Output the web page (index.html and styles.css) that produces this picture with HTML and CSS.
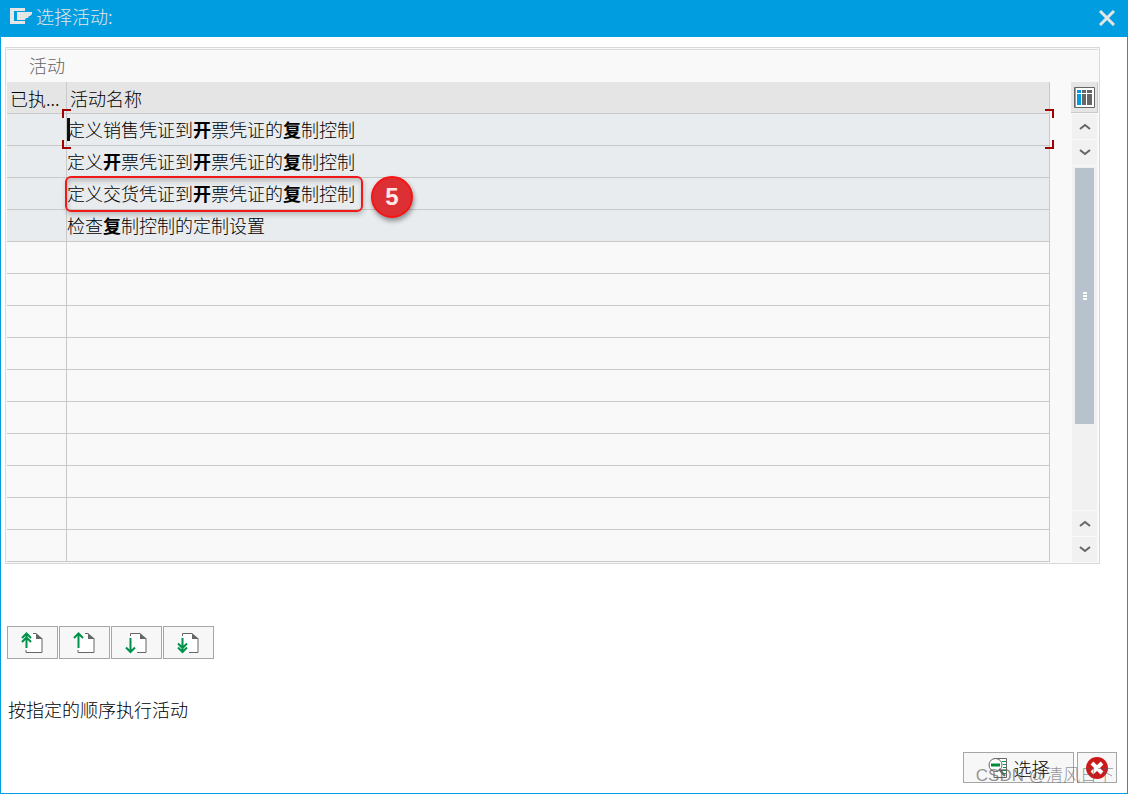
FILE: index.html
```
<!DOCTYPE html>
<html lang="zh-CN">
<head>
    <meta charset="UTF-8">
    <title>选择活动</title>
    <link rel="stylesheet" href="styles.css">
</head>
<body>
<div class="window">
    <header class="titlebar">
        <svg class="logo" width="22" height="16" viewBox="0 0 22 16">
            <path d="M0 0h15v3H4v10h11v3H0z"/>
            <path d="M7 4h15v2l-2 2h-1l-1 2h-2l-1 2H7z"/>
        </svg>
        <h1>选择活动:</h1>
        <button class="close" type="button" aria-label="关闭">
            <svg width="16" height="16" viewBox="0 0 16 16"><path d="M1 1l14 14M15 1L1 15"/></svg>
        </button>
    </header>
    <main>
        <section class="panel">
            <h2>活动</h2>
            <div class="grid">
                <table>
                    <thead>
                    <tr><th class="done">已执...</th><th>活动名称</th></tr>
                    </thead>
                    <tbody>
                    <tr class="filled"><td></td><td class="focus"><i class="caret"></i><i class="corner tl"></i><i class="corner tr"></i><i class="corner bl"></i><i class="corner br"></i><span>定义销售凭证到<b>开</b>票凭证的<b>复</b>制控制</span></td></tr>
                    <tr class="filled"><td></td><td>定义<b>开</b>票凭证到<b>开</b>票凭证的<b>复</b>制控制</td></tr>
                    <tr class="filled"><td></td><td class="marked"><i class="frame"></i><i class="step">5</i>定义交货凭证到<b>开</b>票凭证的<b>复</b>制控制</td></tr>
                    <tr class="filled"><td></td><td>检查<b>复</b>制控制的定制设置</td></tr>
                    <tr><td></td><td></td></tr>
                    <tr><td></td><td></td></tr>
                    <tr><td></td><td></td></tr>
                    <tr><td></td><td></td></tr>
                    <tr><td></td><td></td></tr>
                    <tr><td></td><td></td></tr>
                    <tr><td></td><td></td></tr>
                    <tr><td></td><td></td></tr>
                    <tr><td></td><td></td></tr>
                    <tr><td></td><td></td></tr>
                    </tbody>
                </table>
                <div class="side">
                    <button class="config" type="button" aria-label="表格设置">
                        <svg width="21" height="21" viewBox="0 0 21 21">
                            <path fill="#fff" stroke="#666" d="M.5.5h20v20H.5z"/>
                            <path fill="none" stroke="#6fa8dc" d="M1.5 1v19"/>
                            <path fill="#009de0" d="M3 3h4v3H3zM3 7h4v11H3z"/>
                            <path fill="#666" d="M8 3h4v3H8zM8 7h4v11H8zM13 3h5v3h-5zM13 7h5v11h-5z"/>
                        </svg>
                    </button>
                    <button class="arrow" type="button" aria-label="向上"><svg width="12" height="8" viewBox="0 0 12 8"><path d="M1 6l5-4 5 4"/></svg></button>
                    <button class="arrow" type="button" aria-label="向下"><svg width="12" height="8" viewBox="0 0 12 8"><path d="M1 1l5 4 5-4"/></svg></button>
                    <div class="track"><div class="thumb"><i></i><i></i><i></i></div></div>
                    <button class="arrow" type="button" aria-label="上一页"><svg width="12" height="8" viewBox="0 0 12 8"><path d="M1 6l5-4 5 4"/></svg></button>
                    <button class="arrow" type="button" aria-label="下一页"><svg width="12" height="8" viewBox="0 0 12 8"><path d="M1 1l5 4 5-4"/></svg></button>
                </div>
            </div>
        </section>

        <div class="toolbar">
            <button type="button" aria-label="第一页">
                <svg width="24" height="22" viewBox="0 0 24 22">
                    <path class="sheet" d="M6 2h10v5h5v14H6z"/>
                    <path class="line" d="M12 1.500h3M21 7v13.500H5V18"/>
                    <path class="fold" d="M15 1l7 6h-7z"/>
                    <path class="green" d="M5.500 16V2M1 6l4.500-4.500L10 6M1 10l4.500-4.500L10 10"/>
                </svg>
            </button>
            <button type="button" aria-label="上一页">
                <svg width="24" height="22" viewBox="0 0 24 22">
                    <path class="sheet" d="M6 2h10v5h5v14H6z"/>
                    <path class="line" d="M12 1.500h3M21 7v13.500H5V18"/>
                    <path class="fold" d="M15 1l7 6h-7z"/>
                    <path class="green" d="M5.500 16V2M1 6l4.500-4.500L10 6"/>
                </svg>
            </button>
            <button type="button" aria-label="下一页">
                <svg width="24" height="22" viewBox="0 0 24 22">
                    <path class="sheet" d="M6 2h10v5h5v14H6z"/>
                    <path class="line" d="M5.500 4V1.500H15M21 7v13.500H12"/>
                    <path class="fold" d="M15 1l7 6h-7z"/>
                    <path class="green" d="M5.500 6v14M1 15.500L5.500 20l4.500-4.500"/>
                </svg>
            </button>
            <button type="button" aria-label="最后一页">
                <svg width="24" height="22" viewBox="0 0 24 22">
                    <path class="sheet" d="M6 2h10v5h5v14H6z"/>
                    <path class="line" d="M5.500 4V1.500H15M21 7v13.500H12"/>
                    <path class="fold" d="M15 1l7 6h-7z"/>
                    <path class="green" d="M5.500 6v14M1 15.500L5.500 20l4.500-4.500M1 11.500L5.500 16l4.500-4.500"/>
                </svg>
            </button>
        </div>

        <p class="hint">按指定的顺序执行活动</p>
    </main>
    <footer>
        <button class="choose" type="button">
            <svg width="20" height="20" viewBox="0 0 20 20">
                <path fill="#fff" stroke="#666" d="M6 .5h12.500v19H6z"/>
                <path fill="none" stroke="#009a44" d="M14 3.500h4M15 6.500h3M15 9.500h3M13 12.500h5M14 15.500h4"/>
                <circle cx="7.500" cy="7" r="6.500" fill="#fff" stroke="#666"/>
                <path stroke="#008a3b" stroke-width="3" d="M3 7h9"/>
                <path stroke="#666" stroke-width="2" d="M11 11l6 7"/>
            </svg>
            <span>选择</span>
        </button>
        <button class="cancel" type="button" aria-label="取消">
            <svg width="22" height="22" viewBox="0 0 22 22">
                <circle cx="11" cy="11" r="11" fill="#cc1919"/>
                <path stroke="#fff" stroke-width="4" d="M6 6l10 10M16 6L6 16"/>
            </svg>
        </button>
        <span class="watermark">CSDN @清风日下</span>
    </footer>
</div>
</body>
</html>
```
FILE: styles.css
```
* {
    box-sizing: border-box;
}

body, h1, h2, p {
    margin: 0;
}

body {
    font: 300 18px/24px "Noto Sans CJK SC", sans-serif;
    color: #000;
    background: #fff;
}

button {
    display: flex;
    align-items: center;
    justify-content: center;
    padding: 0;
    border: 0;
    font: inherit;
    color: inherit;
}

.window {
    display: flex;
    flex-direction: column;
    min-height: 100vh;
    border: 1px solid #009de0;
    border-top: 0;
}

.titlebar {
    display: flex;
    align-items: center;
    height: 37px;
    padding: 0 12px 5px 9px;
    background: #009de0;
    color: #e5e5e5;
}

.logo {
    fill: #e5e5e5;
}

h1, h2 {
    font-size: 18px;
    font-weight: 300;
}

h1 {
    margin-left: 4px;
}

.close {
    margin-left: auto;
    padding-top: 4px;
    background: none;
}

.close path {
    stroke: #e5e5e5;
    stroke-width: 3;
}

main {
    flex: 1;
    padding: 10px 27px 0 4px;
}

.panel {
    padding: 1px;
    border: 1px solid #d9d9d9;
    background: #f9f9f9;
}

h2 {
    height: 33px;
    padding: 3px 22px;
    border-top: 1px solid #d9d9d9;
    color: #666;
}

.grid {
    display: flex;
    gap: 21px;
}

table {
    flex: 1;
    table-layout: fixed;
    border-spacing: 0;
}

th, td {
    height: 32px;
    padding: 0 0 2px;
    border-right: 1px solid #c9c9c9;
    border-bottom: 1px solid #c9c9c9;
    font-weight: 300;
    text-align: left;
    white-space: nowrap;
}

th {
    padding: 0 3px;
    background: #e5e5e5;
}

.done {
    width: 60px;
}

b {
    font-weight: 700;
}

.filled td {
    background: #e8ecef;
}

.focus, .marked {
    position: relative;
}

.focus span {
    position: relative;
}

.caret {
    position: absolute;
    left: 0;
    top: 4px;
    width: 3px;
    height: 23px;
    background: #111;
}

.corner {
    position: absolute;
    width: 9px;
    height: 9px;
    border: 0 solid #a00000;
}

.tl {
    left: -5px;
    top: -5px;
    border-width: 2px 0 0 2px;
}

.tr {
    right: -5px;
    top: -5px;
    border-width: 2px 2px 0 0;
}

.bl {
    left: -5px;
    bottom: -4px;
    border-width: 0 0 2px 2px;
}

.br {
    right: -5px;
    bottom: -4px;
    border-width: 0 2px 2px 0;
}

.frame {
    position: absolute;
    left: -2px;
    top: -2px;
    width: 298px;
    height: 36px;
    border: 2px solid #f01818;
    border-radius: 6px;
    box-shadow: 1px 3px 5px rgba(0, 0, 0, .2), inset 1px 3px 5px rgba(0, 0, 0, .2);
}

.step {
    position: absolute;
    left: 304px;
    top: -2px;
    width: 42px;
    height: 42px;
    border: 2px solid #f81414;
    border-radius: 50%;
    background: #dc3035;
    box-shadow: 1px 3px 5px rgba(0, 0, 0, .4);
    color: #fde8e8;
    font: bold 24px/38px "Liberation Sans", sans-serif;
    text-align: center;
}

.side {
    display: flex;
    flex-direction: column;
    align-items: center;
    gap: 1px;
    width: 27px;
}

.config {
    width: 27px;
    height: 31px;
    border-right: 1px solid #c9c9c9;
    border-bottom: 1px solid #c9c9c9;
    background: #e5e5e5;
}

.arrow {
    width: 25px;
    height: 25px;
    background: #f1f1f1;
}

.arrow path {
    fill: none;
    stroke: #666;
    stroke-width: 2;
}

.track {
    flex: 1;
    width: 25px;
    padding: 2px 3px;
    background: #f1f1f1;
}

.thumb {
    display: flex;
    flex-direction: column;
    align-items: center;
    justify-content: center;
    gap: 1px;
    height: 256px;
    background: #b7c2cc;
}

.thumb i {
    width: 4px;
    height: 2px;
    background: #fff;
}

.toolbar {
    display: flex;
    gap: 1px;
    margin: 62px 0 0 2px;
}

.toolbar button {
    width: 51px;
    height: 33px;
    border: 1px solid #a6a6a6;
    background: #f7f7f7;
}

.sheet {
    fill: #fff;
}

.line {
    fill: none;
    stroke: #666;
}

.fold {
    fill: #666;
}

.green {
    fill: none;
    stroke: #00914a;
    stroke-width: 2;
}

.hint {
    margin: 38px 0 0 3px;
}

footer {
    position: relative;
    display: flex;
    justify-content: flex-end;
    gap: 3px;
    padding: 0 10px 10px;
}

footer button {
    height: 31px;
    border: 1px solid #a6a6a6;
    background: #f7f7f7;
}

.choose {
    gap: 6px;
    width: 111px;
}

.cancel {
    width: 40px;
}

.watermark {
    position: absolute;
    right: 13px;
    bottom: 5px;
    color: rgba(90, 90, 90, .65);
    font-family: "Liberation Sans", "Noto Sans CJK SC", sans-serif;
    font-size: 17px;
}
```
